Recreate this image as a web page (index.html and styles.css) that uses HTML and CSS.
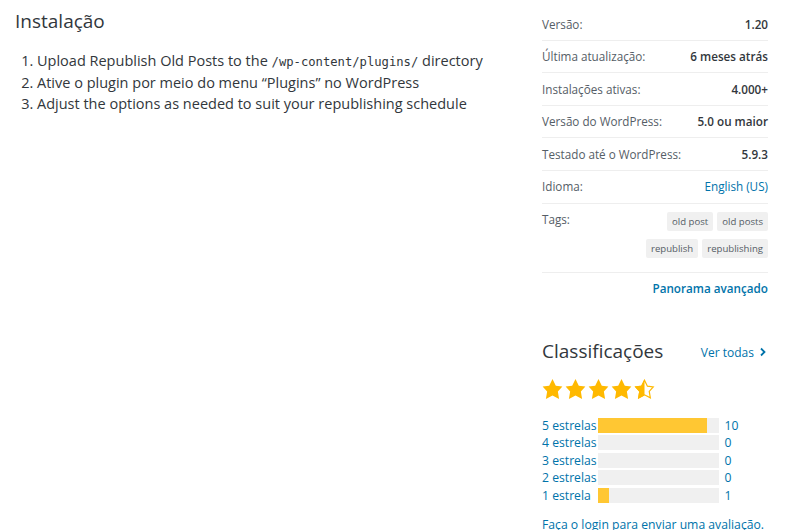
FILE: index.html
```html
<!DOCTYPE html>
<html lang="pt-BR">
<head>
<meta charset="UTF-8" />
<meta name="viewport" content="width=device-width, initial-scale=1" />
<title>Republish Old Posts – Instalação</title>
<link rel="stylesheet" href="styles.css">
</head>
<body>
  <div class="page">
    <main class="main">
      <h2 class="section-title">Instalação</h2>
      <ol class="steps">
        <li>Upload Republish Old Posts to the <code>/wp-content/plugins/</code> directory</li>
        <li>Ative o plugin por meio do menu “Plugins” no WordPress</li>
        <li>Adjust the options as needed to suit your republishing schedule</li>
      </ol>
    </main>

    <aside class="sidebar">
      <ul class="meta">
        <li><span class="label">Versão:</span><strong>1.20</strong></li>
        <li><span class="label">Última atualização:</span><strong>6 meses atrás</strong></li>
        <li><span class="label">Instalações ativas:</span><strong>4.000+</strong></li>
        <li><span class="label">Versão do WordPress:</span><strong>5.0 ou maior</strong></li>
        <li><span class="label">Testado até o WordPress:</span><strong>5.9.3</strong></li>
        <li><span class="label">Idioma:</span><a href="#" class="link">English (US)</a></li>
        <li class="meta-tags">
          <span class="label">Tags:</span>
          <div class="tags">
            <a href="#" class="tag">old post</a>
            <a href="#" class="tag">old posts</a>
            <a href="#" class="tag">republish</a>
            <a href="#" class="tag">republishing</a>
          </div>
        </li>
      </ul>
      <div class="advanced"><a href="#" class="link">Panorama avançado</a></div>

      <div class="ratings">
        <div class="ratings-head">
          <h2 class="section-title">Classificações</h2>
          <a href="#" class="link see-all">Ver todas
            <svg width="10" height="10" viewBox="0 0 10 10"><polyline points="3,1.5 6.5,5 3,8.5" fill="none" stroke="currentColor" stroke-width="1.8"/></svg>
          </a>
        </div>

        <div class="stars" aria-label="4.5 de 5 estrelas">
          <svg class="star" viewBox="0 0 20 20"><path d="M10 1l3 6 6 .75-4.12 4.62L16 19l-6-3-6 3 1.13-6.63L1 7.75 7 7z"/></svg>
          <svg class="star" viewBox="0 0 20 20"><path d="M10 1l3 6 6 .75-4.12 4.62L16 19l-6-3-6 3 1.13-6.63L1 7.75 7 7z"/></svg>
          <svg class="star" viewBox="0 0 20 20"><path d="M10 1l3 6 6 .75-4.12 4.62L16 19l-6-3-6 3 1.13-6.63L1 7.75 7 7z"/></svg>
          <svg class="star" viewBox="0 0 20 20"><path d="M10 1l3 6 6 .75-4.12 4.62L16 19l-6-3-6 3 1.13-6.63L1 7.75 7 7z"/></svg>
          <svg class="star" viewBox="0 0 20 20">
            <defs><clipPath id="half"><rect x="0" y="0" width="10" height="20"/></clipPath></defs>
            <path d="M10 1l3 6 6 .75-4.12 4.62L16 19l-6-3-6 3 1.13-6.63L1 7.75 7 7z" clip-path="url(#half)"/>
            <path class="star-outline" d="M10 2.1l2.65 5.35 5.3.66-3.64 4.08 1 5.85L10 15.3l-5.3 2.74 1-5.85L2.05 8.1l5.3-.66z"/>
          </svg>
        </div>

        <ul class="counts">
          <li><a href="#" class="link bar-label">5 estrelas</a><span class="bar"><span class="bar-fill" style="width: 90.9%"></span></span><span class="link bar-count">10</span></li>
          <li><a href="#" class="link bar-label">4 estrelas</a><span class="bar"><span class="bar-fill" style="width: 0%"></span></span><span class="link bar-count">0</span></li>
          <li><a href="#" class="link bar-label">3 estrelas</a><span class="bar"><span class="bar-fill" style="width: 0%"></span></span><span class="link bar-count">0</span></li>
          <li><a href="#" class="link bar-label">2 estrelas</a><span class="bar"><span class="bar-fill" style="width: 0%"></span></span><span class="link bar-count">0</span></li>
          <li><a href="#" class="link bar-label">1 estrela</a><span class="bar"><span class="bar-fill" style="width: 9.1%"></span></span><span class="link bar-count">1</span></li>
        </ul>

        <p class="login"><a href="#" class="link">Faça o login para enviar uma avaliação.</a></p>
      </div>
    </aside>
  </div>
</body>
</html>
```

FILE: styles.css
```css
body {
  margin: 0;
  background: #fff;
  color: #32373c;
  font-family: 'Open Sans', 'Noto Sans', sans-serif;
  overflow: hidden;
}
.page {
  display: flex;
  width: 800px;
  height: 530px;
  overflow: hidden;
}
.main {
  flex: 1;
  padding: 8px 0 0 15px;
}
.section-title {
  margin: 0;
  font-size: 19px;
  font-weight: 400;
  line-height: 26px;
  color: #32373c;
}
.steps {
  margin: 16px 0 0;
  padding-left: 22px;
  font-size: 14.5px;
  line-height: 21.5px;
}
.steps code {
  font-family: 'DejaVu Sans Mono', 'Liberation Mono', monospace;
  font-size: 12.2px;
  line-height: 1;
}
.link {
  color: #0073aa;
  text-decoration: none;
}
.sidebar {
  width: 226px;
  margin-right: 32px;
  padding-top: 8px;
  font-size: 11.7px;
}
.meta {
  list-style: none;
  margin: 0;
  padding: 0;
}
.meta li {
  display: flex;
  justify-content: space-between;
  align-items: flex-start;
  padding: 6.5px 0 6px;
  line-height: 19.1px;
  border-bottom: 1px solid #eee;
}
.label {
  color: #555d66;
}
.meta strong {
  font-weight: 600;
  color: #32373c;
}
.meta-tags .tags {
  display: flex;
  flex-wrap: wrap;
  justify-content: flex-end;
  gap: 8px 4px;
  width: 122px;
  padding: 2px 0 8px;
}
.tag {
  display: block;
  padding: 0 5px;
  background: #f0f0f0;
  border-radius: 2px;
  color: #555d66;
  font-size: 9.6px;
  line-height: 19px;
  text-decoration: none;
}
.advanced {
  text-align: right;
  padding-top: 6px;
  line-height: 19.5px;
  font-weight: 600;
}
.ratings {
  margin-top: 39px;
}
.ratings-head {
  display: flex;
  justify-content: space-between;
  align-items: center;
}
.see-all {
  display: flex;
  align-items: center;
  gap: 4px;
  margin-top: 3px;
  font-size: 12px;
}
.stars {
  display: flex;
  margin-top: 14px;
  margin-left: -1px;
}
.star {
  width: 23px;
  height: 22px;
  fill: #ffb900;
}
.star-outline {
  fill: none;
  stroke: #ffb900;
  stroke-width: 1.1;
}
.counts {
  list-style: none;
  margin: 17px 0 0;
  padding: 0;
}
.counts li {
  display: flex;
  align-items: center;
  height: 17.5px;
  font-size: 12.2px;
}
.bar-label {
  width: 55.5px;
  white-space: nowrap;
}
.bar {
  width: 121px;
  height: 15px;
  background: #f0f0f0;
}
.bar-fill {
  display: block;
  height: 100%;
  background: #ffc733;
}
.bar-count {
  margin-left: 6px;
}
.login {
  margin: 11px 0 0;
  line-height: 19.5px;
  font-size: 12.2px;
}
```
